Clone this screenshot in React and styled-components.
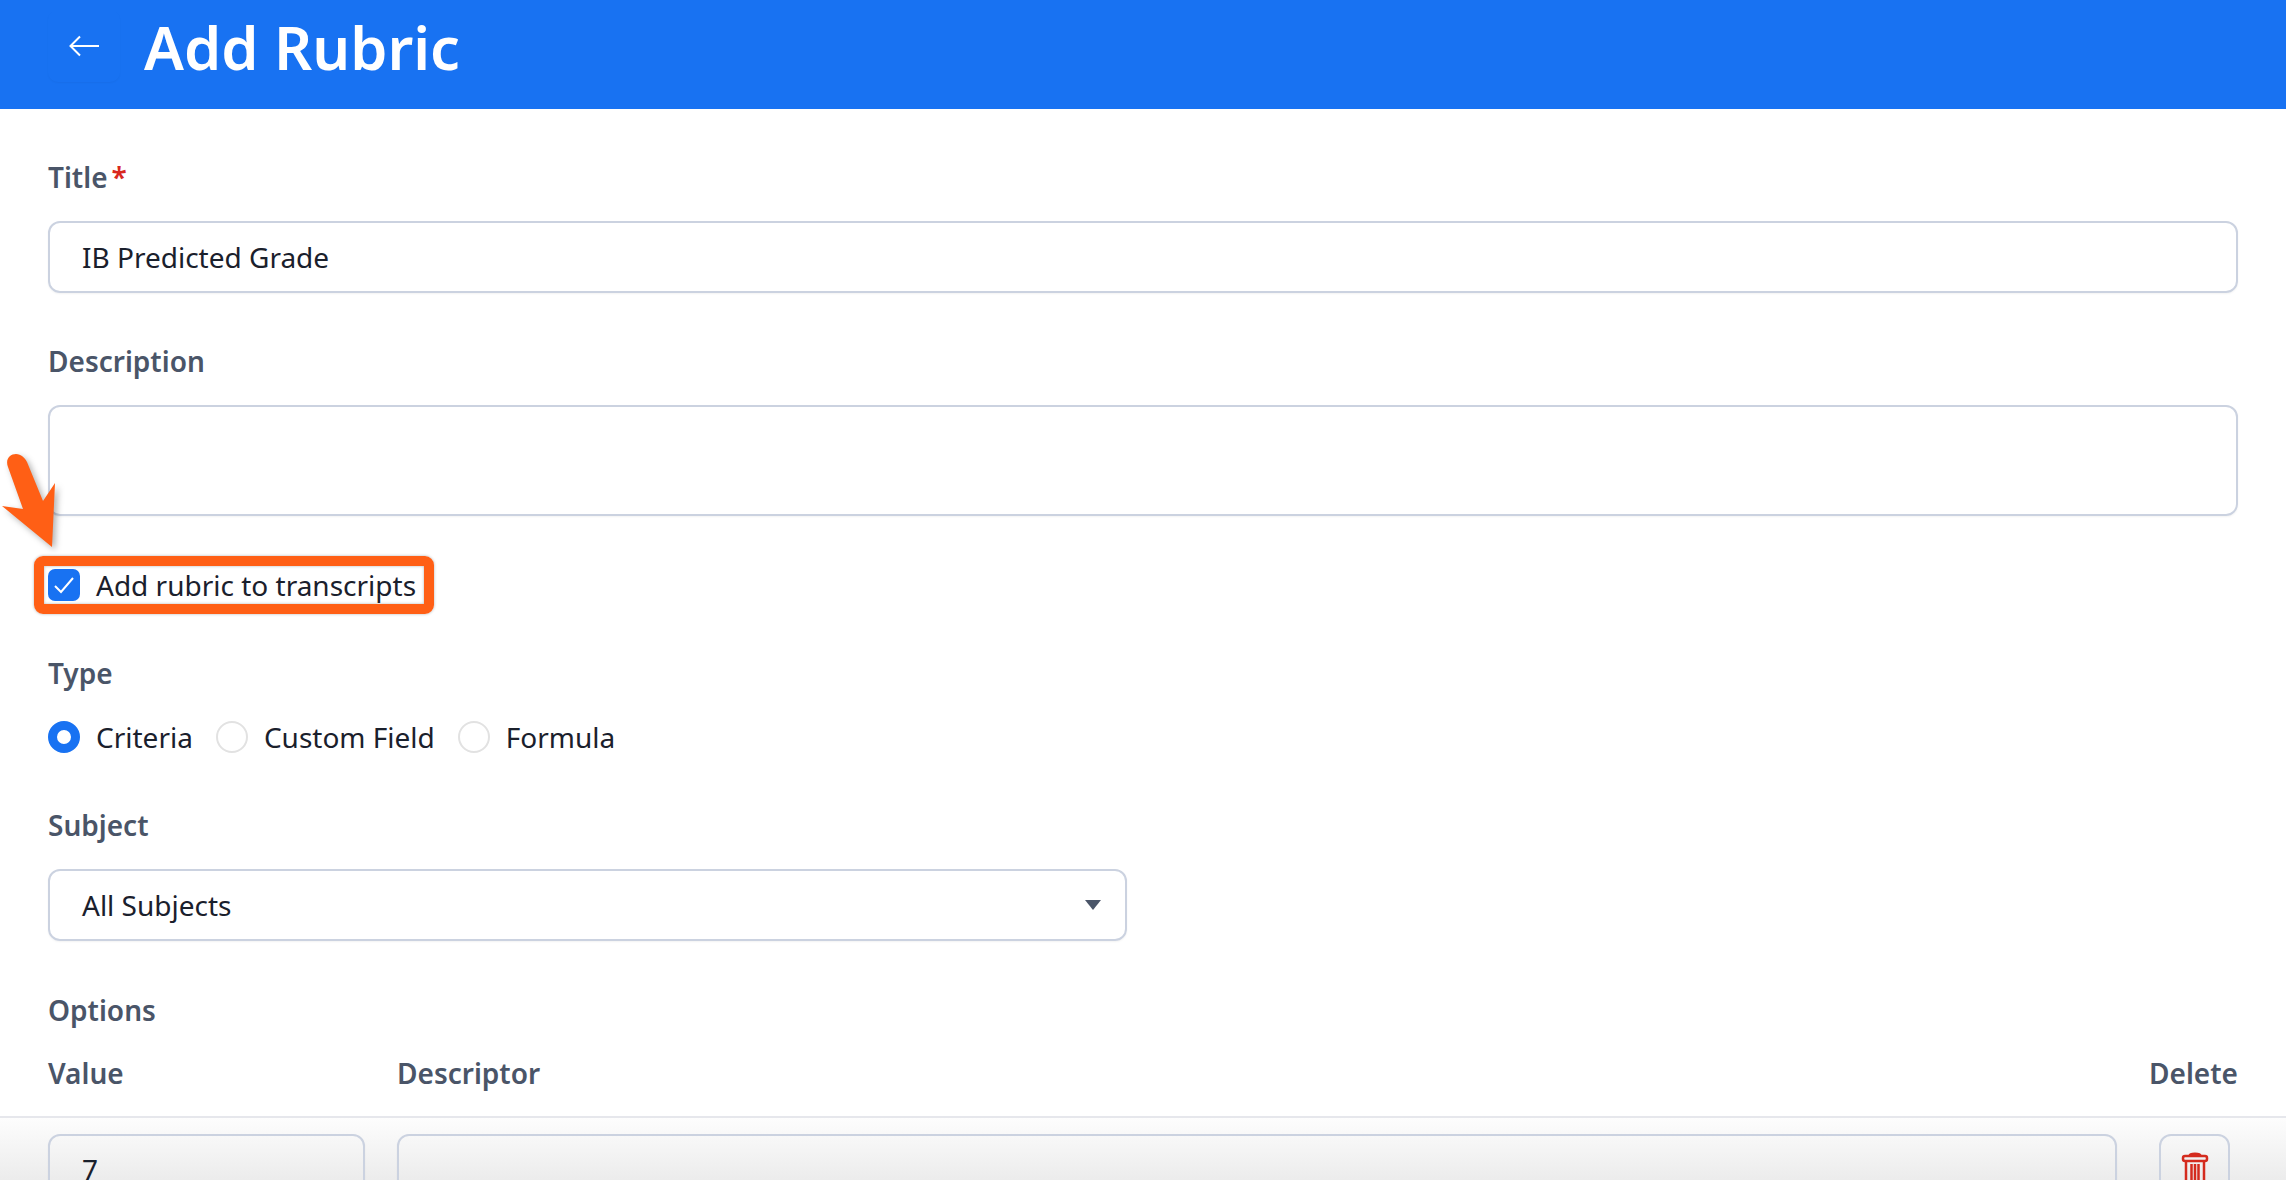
import React from 'react';
import styled, { createGlobalStyle } from 'styled-components';

const GlobalStyle = createGlobalStyle`
  html, body {
    margin: 0;
    padding: 0;
    background: #fff;
    font-family: "Noto Sans", sans-serif;
    color: #1a202c;
  }
`;

const Page = styled.div`
  position: relative;
  width: 2286px;
  height: 1180px;
  overflow: hidden;
  background: #fff;
`;

const Header = styled.header`
  display: flex;
  align-items: center;
  gap: 24px;
  height: 109px;
  padding-left: 48px;
  background: #1872f2;
`;

const BackButton = styled.div`
  display: flex;
  align-items: center;
  justify-content: center;
  width: 72px;
  height: 72px;
  margin-top: -18px;
  border-radius: 10px;
  box-shadow: 0 1px 2px rgba(0, 0, 0, 0.04);
`;

const PageTitle = styled.h1`
  margin: -16px 0 0;
  font-size: 59.5px;
  line-height: 90px;
  font-weight: 600;
  color: #fff;
`;

const Form = styled.div`
  display: flex;
  flex-direction: column;
  padding: 48px 48px 0;
`;

const Label = styled.div`
  font-size: 28px;
  line-height: 40px;
  font-weight: 600;
  color: #4a5568;
  margin-top: ${({ $top }) => $top || 0}px;
`;

const Required = styled.span`
  color: #d9281e;
  margin-left: 4px;
`;

const Field = styled.div`
  box-sizing: border-box;
  display: flex;
  align-items: center;
  height: ${({ $height }) => $height || 72}px;
  width: ${({ $width }) => ($width ? `${$width}px` : '100%')};
  margin-top: ${({ $top }) => $top ?? 24}px;
  padding: 0 32px;
  border: 2px solid #cbd2e0;
  border-radius: 12px;
  font-size: 28px;
  box-shadow: 0 1px 2px rgba(0, 0, 0, 0.05);
`;

const SelectField = styled(Field)`
  justify-content: space-between;
  padding-right: 24px;
`;

const Caret = styled.span`
  width: 0;
  height: 0;
  border-left: 8px solid transparent;
  border-right: 8px solid transparent;
  border-top: 10px solid #4a5568;
`;

const Highlight = styled.div`
  box-sizing: border-box;
  display: flex;
  align-items: center;
  gap: 16px;
  width: 400px;
  height: 58px;
  margin: 40px 0 0 -14px;
  padding-left: 4px;
  border: 10px solid #ff5f15;
  border-radius: 9px;
  box-shadow: 0 0 3px rgba(0, 0, 0, 0.3), inset 0 0 3px rgba(0, 0, 0, 0.3);
  font-size: 28px;
  white-space: nowrap;
`;

const CheckBox = styled.span`
  display: flex;
  align-items: center;
  justify-content: center;
  width: 32px;
  height: 32px;
  border-radius: 7px;
  background: #1872f2;
`;

const RadioRow = styled.div`
  display: flex;
  align-items: center;
  height: 40px;
  margin-top: 24px;
`;

const RadioItem = styled.div`
  display: flex;
  align-items: center;
  gap: 16px;
  margin-right: 23px;
  font-size: 28px;
`;

const RadioDot = styled.span`
  box-sizing: border-box;
  width: 32px;
  height: 32px;
  border-radius: 50%;
  background: #fff;
  border: ${({ $on }) => ($on ? '9px solid #1872f2' : '2px solid #e2e2e2')};
`;

const ColumnHeads = styled.div`
  display: grid;
  grid-template-columns: 317px 1fr auto;
  column-gap: 32px;
  margin-top: 23px;
`;

const OptionRow = styled.div`
  display: grid;
  grid-template-columns: 317px 1720px 82px;
  column-gap: 32px;
  height: 63px;
  margin-top: 23px;
  padding: 16px 48px 0;
  border-top: 2px solid #e6e7ec;
  background: linear-gradient(#fdfdfd, #e7e7e7);
`;

const RowField = styled(Field)`
  margin-top: 0;
  background: transparent;
  align-items: flex-start;
  padding-top: 14px;
`;

const DeleteButton = styled.div`
  box-sizing: border-box;
  display: flex;
  justify-content: center;
  width: 71px;
  height: 72px;
  padding-top: 16px;
  margin-left: 10px;
  border: 2px solid #cbd2e0;
  border-radius: 12px;
`;

const Arrow = styled.svg`
  position: absolute;
  left: 0;
  top: 450px;
  filter: drop-shadow(3px 3px 3px rgba(0, 0, 0, 0.3));
`;

const BackIcon = () => (
  <svg width="30" height="22" viewBox="0 0 30 22" fill="none" stroke="#fff" strokeWidth="2">
    <path d="M30 11H2M11 1.5 1.5 11l9.5 9.5" />
  </svg>
);

const CheckIcon = () => (
  <svg width="22" height="18" viewBox="0 0 22 18" fill="none" stroke="#fff" strokeWidth="2">
    <path d="M2 10l6 6L20 2" />
  </svg>
);

const TrashIcon = () => (
  <svg width="28" height="40" viewBox="0 0 28 40" fill="none" stroke="#d42b1e" strokeWidth="2.5">
    <path d="M9 3.5C9 1.5 19 1.5 19 3.5" strokeWidth="3" />
    <rect x="2" y="4" width="24" height="5" rx="2" />
    <path d="M5 9v28h18V9M10.5 12v22M14 12v22M17.5 12v22" />
  </svg>
);

const App = () => (
  <Page>
    <GlobalStyle />
    <Header>
      <BackButton>
        <BackIcon />
      </BackButton>
      <PageTitle>Add Rubric</PageTitle>
    </Header>
    <Form>
      <Label>
        Title<Required>*</Required>
      </Label>
      <Field>IB Predicted Grade</Field>
      <Label $top={48}>Description</Label>
      <Field $height={111} />
      <Highlight>
        <CheckBox>
          <CheckIcon />
        </CheckBox>
        Add rubric to transcripts
      </Highlight>
      <Label $top={39}>Type</Label>
      <RadioRow>
        <RadioItem>
          <RadioDot $on />
          Criteria
        </RadioItem>
        <RadioItem>
          <RadioDot />
          Custom Field
        </RadioItem>
        <RadioItem>
          <RadioDot />
          Formula
        </RadioItem>
      </RadioRow>
      <Label $top={48}>Subject</Label>
      <SelectField $width={1079}>
        All Subjects
        <Caret />
      </SelectField>
      <Label $top={49}>Options</Label>
      <ColumnHeads>
        <Label>Value</Label>
        <Label>Descriptor</Label>
        <Label>Delete</Label>
      </ColumnHeads>
    </Form>
    <OptionRow>
      <RowField $height={72}>7</RowField>
      <RowField $height={72} />
      <DeleteButton>
        <TrashIcon />
      </DeleteButton>
    </OptionRow>
    <Arrow width="60" height="100" viewBox="0 0 60 100">
      <path
        d="M8 17C5 9 10 4 16 4C21 4 25 8 27 12L43 51L55 33L52 97L2 56L23 59Z"
        fill="#ff5f15"
      />
    </Arrow>
  </Page>
);

export default App;
